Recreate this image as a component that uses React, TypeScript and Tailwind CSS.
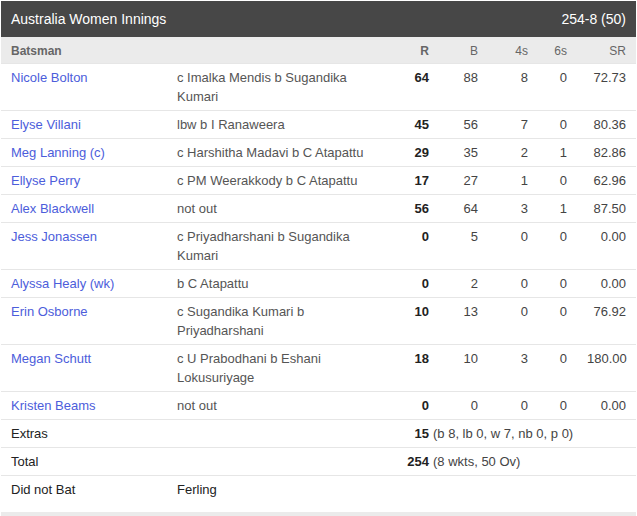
import React from 'react';

interface Batter {
  name: string;
  howOut: string;
  r: number;
  b: number;
  fours: number;
  sixes: number;
  sr: string;
}

const batters: Batter[] = [
  { name: 'Nicole Bolton', howOut: 'c Imalka Mendis b Sugandika Kumari', r: 64, b: 88, fours: 8, sixes: 0, sr: '72.73' },
  { name: 'Elyse Villani', howOut: 'lbw b I Ranaweera', r: 45, b: 56, fours: 7, sixes: 0, sr: '80.36' },
  { name: 'Meg Lanning (c)', howOut: 'c Harshitha Madavi b C Atapattu', r: 29, b: 35, fours: 2, sixes: 1, sr: '82.86' },
  { name: 'Ellyse Perry', howOut: 'c PM Weerakkody b C Atapattu', r: 17, b: 27, fours: 1, sixes: 0, sr: '62.96' },
  { name: 'Alex Blackwell', howOut: 'not out', r: 56, b: 64, fours: 3, sixes: 1, sr: '87.50' },
  { name: 'Jess Jonassen', howOut: 'c Priyadharshani b Sugandika Kumari', r: 0, b: 5, fours: 0, sixes: 0, sr: '0.00' },
  { name: 'Alyssa Healy (wk)', howOut: 'b C Atapattu', r: 0, b: 2, fours: 0, sixes: 0, sr: '0.00' },
  { name: 'Erin Osborne', howOut: 'c Sugandika Kumari b Priyadharshani', r: 10, b: 13, fours: 0, sixes: 0, sr: '76.92' },
  { name: 'Megan Schutt', howOut: 'c U Prabodhani b Eshani Lokusuriyage', r: 18, b: 10, fours: 3, sixes: 0, sr: '180.00' },
  { name: 'Kristen Beams', howOut: 'not out', r: 0, b: 0, fours: 0, sixes: 0, sr: '0.00' },
];

const cols = 'grid grid-cols-[166px_233px_39px_49px_50px_39px_59px]';

export default function App() {
  return (
    <div className="w-[637px] h-[516px] bg-white pt-px pl-px pr-px overflow-hidden font-['Liberation_Sans',Arial,sans-serif]">
      {/* Title bar */}
      <div className="h-9 bg-[#474747] text-white text-[14px] flex items-center justify-between px-[10px]">
        <span>Australia Women Innings</span>
        <span>254-8 (50)</span>
      </div>

      {/* Column headings */}
      <div className={`${cols} h-[26px] pt-px items-center bg-[#ebebeb] text-[12px] font-bold text-[#666]`}>
        <div className="px-[10px]">Batsman</div>
        <div />
        <div className="px-[10px] text-right">R</div>
        <div className="px-[10px] text-right font-normal">B</div>
        <div className="px-[10px] text-right font-normal">4s</div>
        <div className="px-[10px] text-right font-normal">6s</div>
        <div className="px-[10px] text-right font-normal">SR</div>
      </div>

      {/* Batters */}
      {batters.map((p) => (
        <div key={p.name} className={`${cols} text-[13px] leading-[19px] py-1 border-t border-[#e6e6e6]`}>
          <div className="px-[10px] text-[#4c5ddb]">{p.name}</div>
          <div className="px-[10px] text-[#555]">{p.howOut}</div>
          <div className="px-[10px] text-right font-bold text-[#222]">{p.r}</div>
          <div className="px-[10px] text-right text-[#444]">{p.b}</div>
          <div className="px-[10px] text-right text-[#444]">{p.fours}</div>
          <div className="px-[10px] text-right text-[#444]">{p.sixes}</div>
          <div className="px-[10px] text-right text-[#444]">{p.sr}</div>
        </div>
      ))}

      {/* Extras */}
      <div className={`${cols} text-[13px] leading-[19px] py-1 border-t border-[#e6e6e6]`}>
        <div className="px-[10px] text-[#222]">Extras</div>
        <div />
        <div className="col-span-5 flex whitespace-nowrap">
          <span className="w-[29px] shrink-0 text-right font-bold text-[#222]">15</span>
          <span className="ml-1 text-[#444]">(b 8, lb 0, w 7, nb 0, p 0)</span>
        </div>
      </div>

      {/* Total */}
      <div className={`${cols} text-[13px] leading-[19px] py-1 border-t border-[#e6e6e6]`}>
        <div className="px-[10px] text-[#222]">Total</div>
        <div />
        <div className="col-span-5 flex whitespace-nowrap">
          <span className="w-[29px] shrink-0 text-right font-bold text-[#222]">254</span>
          <span className="ml-1 text-[#444]">(8 wkts, 50 Ov)</span>
        </div>
      </div>

      {/* Did not bat */}
      <div className={`${cols} text-[13px] leading-[19px] pt-1 pb-[13px] border-t border-[#e6e6e6]`}>
        <div className="px-[10px] text-[#222]">Did not Bat</div>
        <div className="px-[10px] text-[#222]">Ferling</div>
      </div>

      <div className="h-1 bg-[#ebebeb]" />
    </div>
  );
}
